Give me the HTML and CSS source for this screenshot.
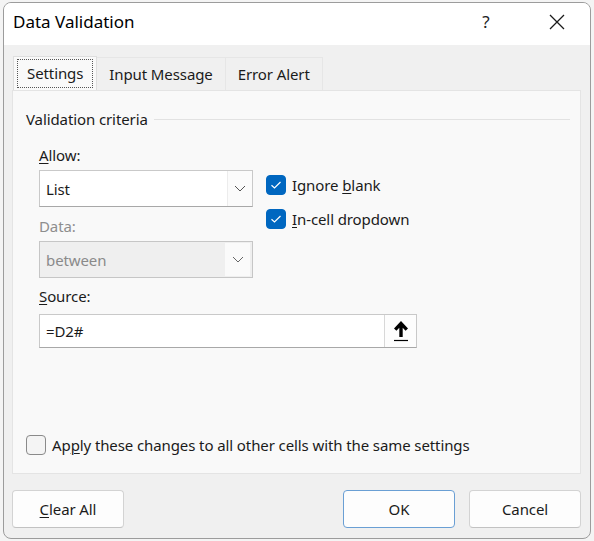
FILE: index.html
```html
<!DOCTYPE html>
<html lang="en">
<head>
  <meta charset="UTF-8" />
  <meta name="viewport" content="width=device-width, initial-scale=1" />
  <title>Data Validation</title>
  <link rel="stylesheet" href="styles.css">
</head>
<body>
  <div class="window">
    <div class="titlebar">
      <span class="title">Data Validation</span>
      <span class="help">?</span>
      <span class="close">
        <svg width="16" height="16" viewBox="0 0 16 16"><path d="M1 1 L15 15 M15 1 L1 15" stroke="#1a1a1a" stroke-width="1.3" fill="none"/></svg>
      </span>
    </div>

    <div class="content">
      <div class="tabs">
        <div class="tab active"><span class="focus">Settings</span></div>
        <div class="tab">Input Message</div>
        <div class="tab">Error Alert</div>
      </div>

      <div class="panel">
        <div class="group-title">
          <span>Validation criteria</span>
          <span class="rule"></span>
        </div>

        <div class="criteria">
          <div class="fields">
            <label class="label"><u>A</u>llow:</label>
            <div class="select">
              <span class="value">List</span>
              <span class="chevron">
                <svg width="12" height="7" viewBox="0 0 12 7"><path d="M1 1 L6 6 L11 1" stroke="#555" stroke-width="1" fill="none"/></svg>
              </span>
            </div>

            <label class="label disabled">Data:</label>
            <div class="select is-disabled">
              <span class="value">between</span>
              <span class="chevron">
                <svg width="12" height="7" viewBox="0 0 12 7"><path d="M1 1 L6 6 L11 1" stroke="#666" stroke-width="1" fill="none"/></svg>
              </span>
            </div>
          </div>

          <div class="checks">
            <div class="check">
              <span class="box checked">
                <svg width="12" height="10" viewBox="0 0 12 10"><path d="M1.5 5.2 L4.5 8 L10.5 2" stroke="#fff" stroke-width="1.2" fill="none"/></svg>
              </span>
              <span>Ignore <u>b</u>lank</span>
            </div>
            <div class="check">
              <span class="box checked">
                <svg width="12" height="10" viewBox="0 0 12 10"><path d="M1.5 5.2 L4.5 8 L10.5 2" stroke="#fff" stroke-width="1.2" fill="none"/></svg>
              </span>
              <span><u>I</u>n-cell dropdown</span>
            </div>
          </div>
        </div>

        <label class="label source-label"><u>S</u>ource:</label>
        <div class="source">
          <span class="value">=D2#</span>
          <span class="ref-btn">
            <svg width="18" height="22" viewBox="0 0 18 22">
              <path d="M9 1 L16 8.5 L13.6 10.8 L10.7 7.8 L10.7 17 L7.3 17 L7.3 7.8 L4.4 10.8 L2 8.5 Z" fill="#000"/>
              <path d="M2 20.5 L16 20.5" stroke="#000" stroke-width="1.2"/>
            </svg>
          </span>
        </div>

        <div class="check apply">
          <span class="box"></span>
          <span>Ap<u>p</u>ly these changes to all other cells with the same settings</span>
        </div>
      </div>

      <div class="buttons">
        <button class="btn"><u>C</u>lear All</button>
        <span class="spacer"></span>
        <button class="btn default">OK</button>
        <button class="btn">Cancel</button>
      </div>
    </div>
  </div>
</body>
</html>
```

FILE: styles.css
```css
* {
  box-sizing: border-box;
}
body {
  margin: 0;
  width: 594px;
  height: 541px;
  background-color: #f4f4f4;
  font-family: 'Noto Sans', 'Open Sans', sans-serif;
  font-size: 15px;
  letter-spacing: -0.1px;
  color: #1b1b1b;
  overflow: hidden;
}
u {
  text-decoration-thickness: 1px;
  text-underline-offset: 2px;
}

/* dialog frame */
.window {
  margin: 2px 3px 0 3px;
  height: 537px;
  background-color: #f0f0f0;
  border: 1px solid #9c9c9c;
  border-radius: 8px;
  overflow: hidden;
}
.titlebar {
  height: 42px;
  background-color: #fff;
  display: flex;
  align-items: center;
  padding: 0 0 5px 9px;
}
.title {
  flex: 1;
  font-size: 17px;
  letter-spacing: 0;
  color: #000;
}
.help {
  width: 36px;
  font-size: 17px;
  color: #222;
  text-align: center;
  margin-right: 30px;
}
.close {
  width: 46px;
  display: flex;
  justify-content: center;
  margin-right: 10px;
}

.content {
  padding: 11px 9px 0 8px;
}

/* tabs */
.tabs {
  display: flex;
  height: 34px;
  padding-left: 1px;
  align-items: flex-end;
}
.tab {
  height: 33px;
  padding: 0 12px;
  display: flex;
  align-items: center;
  background-color: #f0f0f0;
  border: 1px solid #e6e6e6;
  border-bottom: none;
}
.tab + .tab {
  border-left: none;
}
.tab.active {
  height: 34px;
  padding: 0 3px;
  background-color: #f9f9f9;
  border-color: #dedede;
}
.focus {
  border: 1px dotted #555;
  padding: 3px 9px 4px;
}

/* settings page */
.panel {
  height: 384px;
  background-color: #f9f9f9;
  border: 1px solid #e4e4e4;
  padding: 18px 13px 0 13px;
}
.group-title {
  display: flex;
  align-items: center;
  gap: 6px;
}
.rule {
  flex: 1;
  height: 1px;
  background-color: #e2e2e2;
  margin-right: -3px;
}
.criteria {
  display: flex;
  gap: 13px;
  padding-left: 13px;
}
.fields {
  width: 214px;
}
.label {
  display: block;
  margin-top: 15px;
  height: 22px;
  line-height: 22px;
}
.label.disabled {
  color: #8e8e8e;
  margin-top: 8px;
}
.select {
  margin-top: 4px;
  height: 37px;
  display: flex;
  background-color: #fff;
  border: 1px solid #c9c9c9;
  border-bottom-color: #a8a8a8;
}
.select .value {
  flex: 1;
  display: flex;
  align-items: center;
  padding-left: 6px;
}
.chevron {
  width: 25px;
  display: flex;
  align-items: center;
  justify-content: center;
  border-left: 1px solid #ececec;
  background-color: #fbfbfb;
}
.select.is-disabled {
  background-color: #efefef;
  border-color: #c6c6c6;
  color: #8a8a8a;
}
.select.is-disabled .chevron {
  background-color: #fafafa;
  margin: 1px 2px 1px 0;
  border-left: none;
}

.checks {
  padding-top: 46px;
}
.check {
  display: flex;
  align-items: center;
  gap: 6px;
  height: 20px;
  margin-bottom: 14px;
}
.box {
  width: 20px;
  height: 20px;
  border-radius: 4px;
  border: 1px solid #8a8a8a;
  background-color: #f4f4f4;
  display: flex;
  align-items: center;
  justify-content: center;
}
.box.checked {
  background-color: #0067c0;
  border-color: #0067c0;
}

.source-label {
  margin-left: 13px;
  margin-top: 7px;
}
.source {
  margin: 7px 0 0 13px;
  width: 378px;
  height: 34px;
  display: flex;
  background-color: #fff;
  border: 1px solid #c9c9c9;
  border-bottom-color: #a8a8a8;
}
.source .value {
  flex: 1;
  display: flex;
  align-items: center;
  padding-left: 6px;
}
.ref-btn {
  width: 32px;
  display: flex;
  align-items: center;
  justify-content: center;
  border-left: 1px solid #d8d8d8;
  background-color: #fdfdfd;
}

.check.apply {
  margin-top: 87px;
  margin-left: 0;
}

/* bottom buttons */
.buttons {
  display: flex;
  gap: 14px;
  margin-top: 16px;
}
.spacer {
  flex: 1;
}
.btn {
  width: 112px;
  height: 38px;
  font-family: inherit;
  font-size: 15px;
  letter-spacing: -0.1px;
  color: #1b1b1b;
  background-color: #fdfdfd;
  border: 1px solid #d3d3d3;
  border-bottom-color: #c2c2c2;
  border-radius: 4px;
}
.btn.default {
  border-color: #6a9fd4;
}
```
